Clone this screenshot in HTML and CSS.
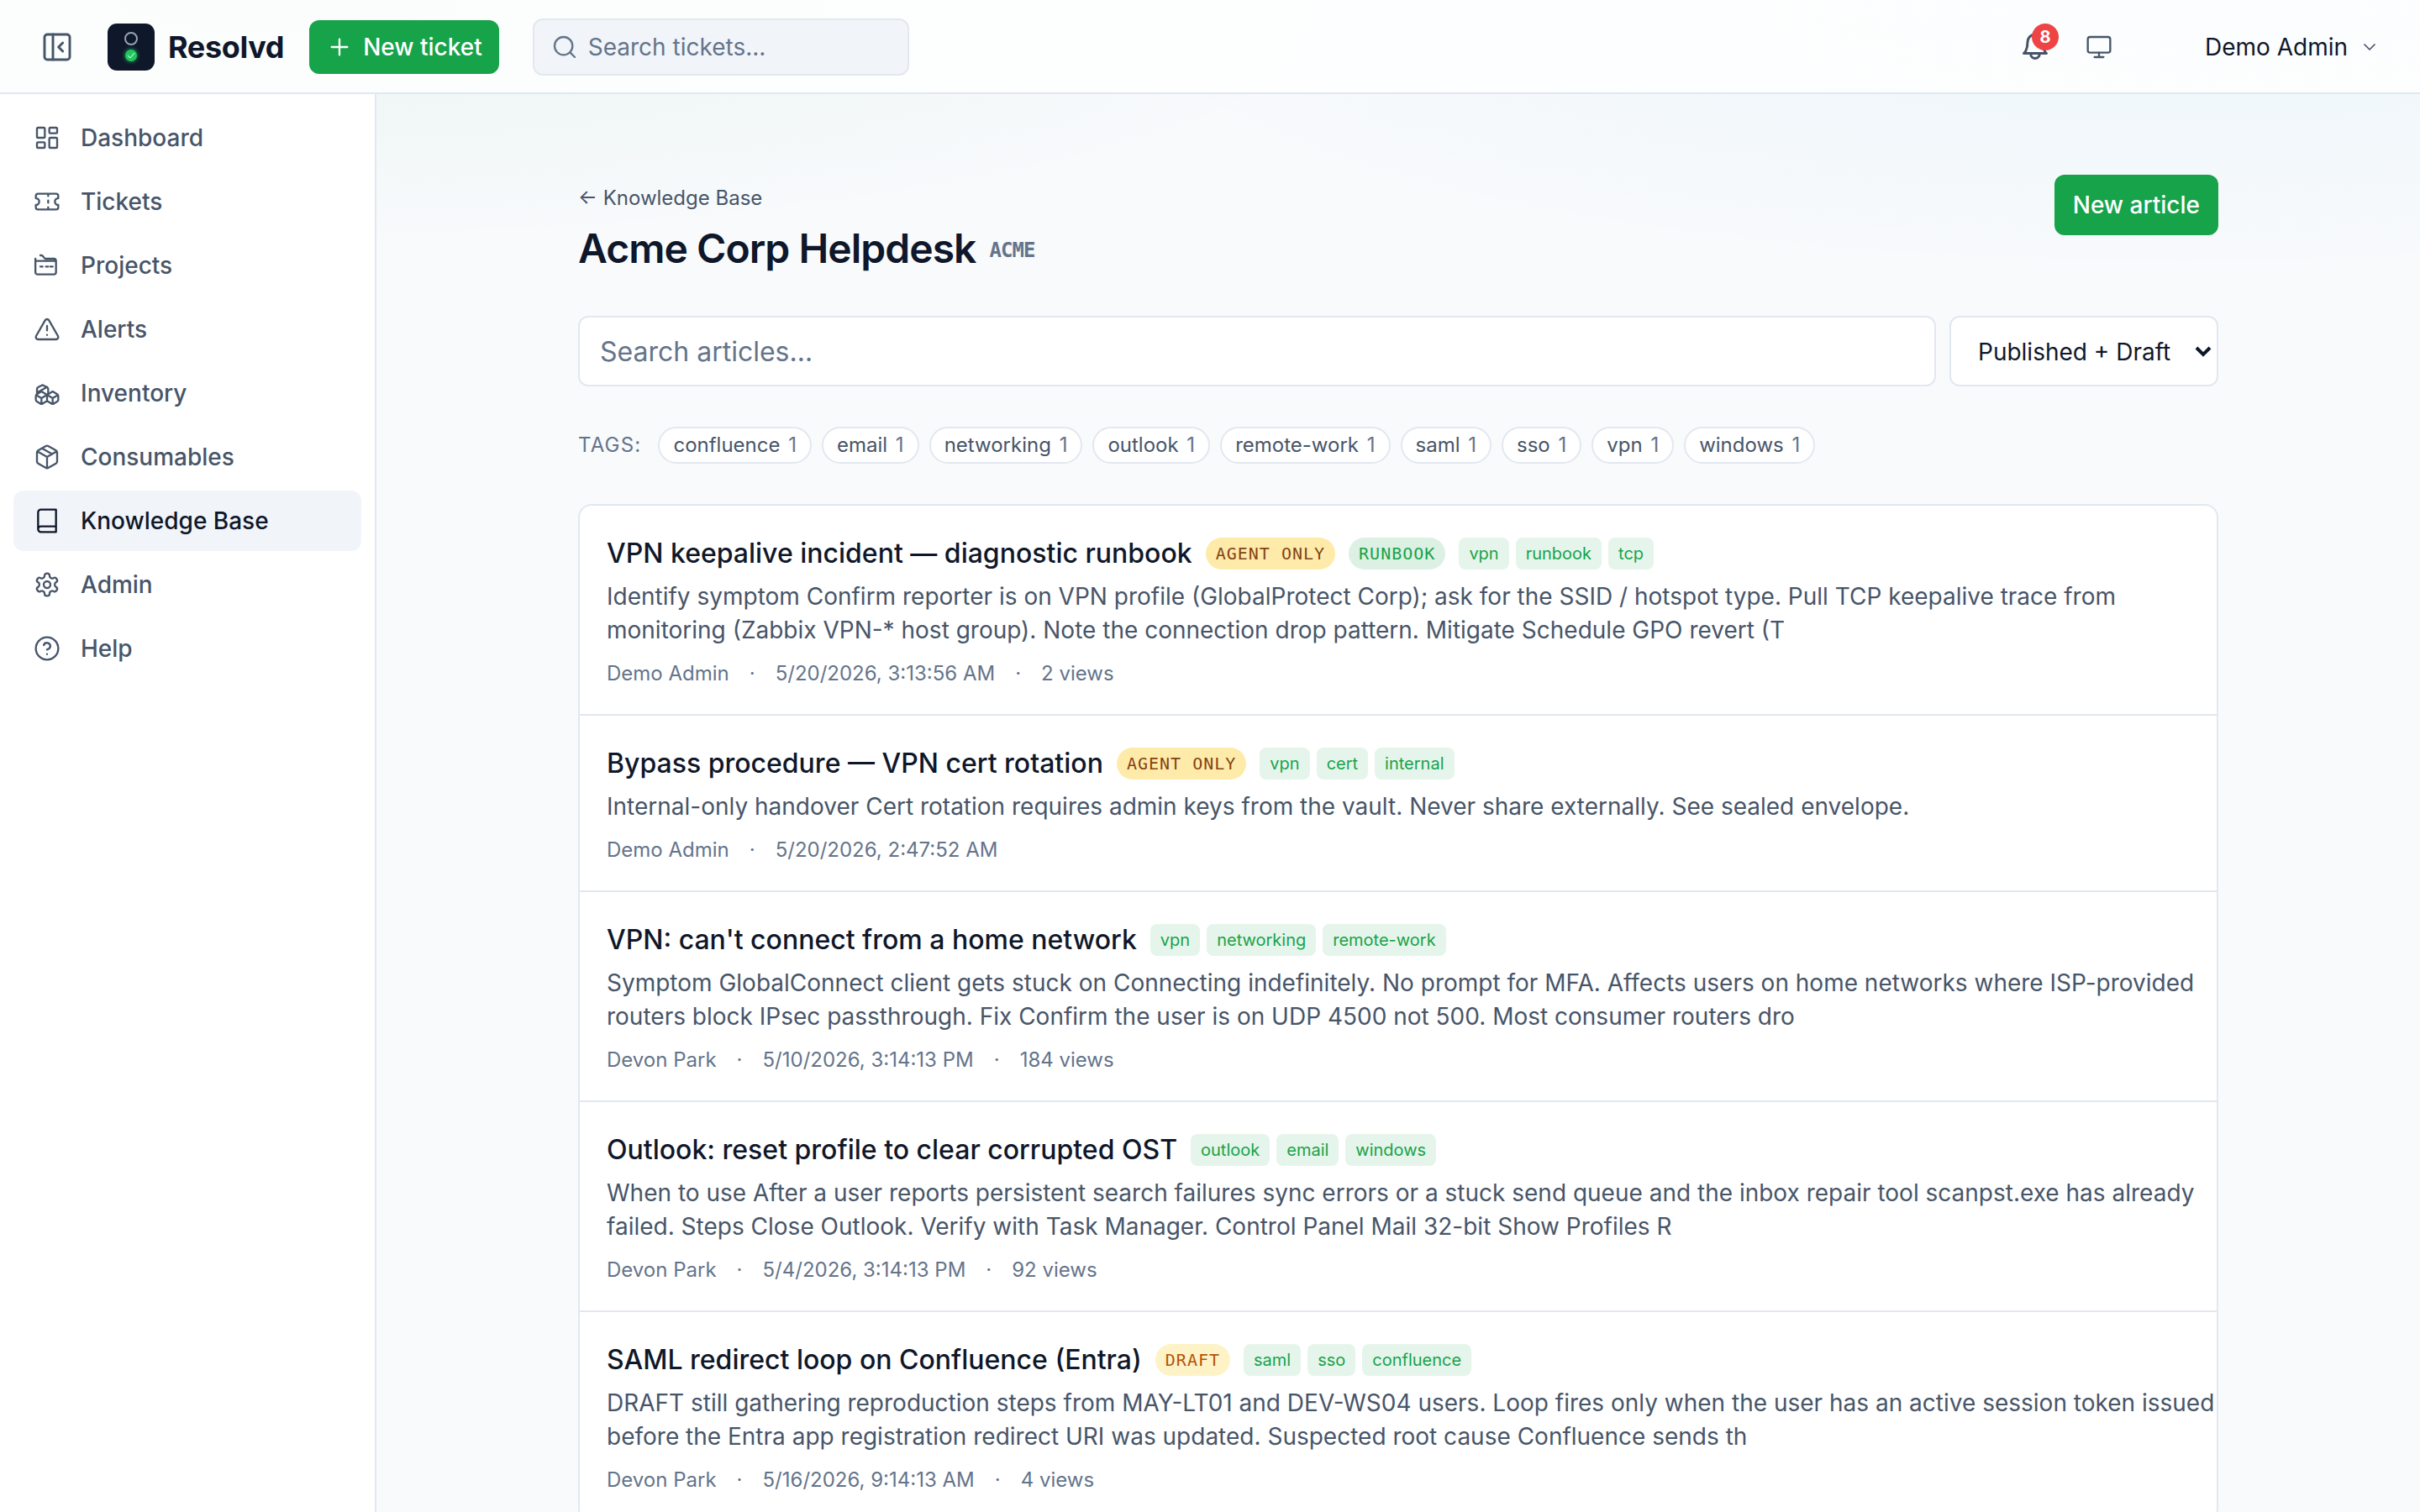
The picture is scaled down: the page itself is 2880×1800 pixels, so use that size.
FILE: index.html
```html
<!DOCTYPE html>
<html lang="en">
<head>
    <meta charset="UTF-8">
    <meta name="viewport" content="width=device-width, initial-scale=1.0">
    <title>Acme Corp Helpdesk - Resolvd</title>
    <link rel="stylesheet" href="styles.css">
</head>
<body>
    <header class="topbar">
        <button class="icon-btn toggle" type="button" aria-label="Collapse sidebar">
            <svg class="icon icon-lg" viewBox="0 0 24 24"><rect x="3" y="3" width="18" height="18" rx="2"/><path d="M9 3v18M16 15l-3-3 3-3"/></svg>
        </button>
        <a class="brand" href="#">
            <svg class="logo" viewBox="0 0 56 56">
                <defs><filter id="glow" x="-50%" y="-50%" width="200%" height="200%"><feGaussianBlur stdDeviation="2"/></filter></defs>
                <rect width="56" height="56" rx="11" fill="#0f172a"/>
                <circle cx="28" cy="18" r="7" fill="none" stroke="#94a3b8" stroke-width="2"/>
                <circle cx="28" cy="38" r="8" fill="#22c55e" opacity="0.6" filter="url(#glow)"/>
                <circle cx="28" cy="38" r="7" fill="#22c55e"/>
                <path d="M24 38l3 3 5-6" fill="none" stroke="#fff" stroke-width="1"/>
            </svg>
            <span>Resolvd</span>
        </a>
        <button class="btn btn-ticket" type="button">
            <svg class="icon" viewBox="0 0 24 24"><path d="M5 12h14M12 5v14"/></svg>
            New ticket
        </button>
        <label class="ticket-search">
            <svg class="icon" viewBox="0 0 24 24"><circle cx="11" cy="11" r="8"/><path d="M21 21l-4-4"/></svg>
            <input type="search" placeholder="Search tickets..." aria-label="Search tickets">
        </label>
        <div class="topbar-right">
            <button class="icon-btn bell" type="button" aria-label="Notifications">
                <svg class="icon icon-md" viewBox="0 0 24 24"><path d="M6 8a6 6 0 0 1 12 0c0 7 3 9 3 9H3s3-2 3-9M8.500 17.500a3.500 3.500 0 0 0 7 0"/></svg>
                <span class="bell-count">8</span>
            </button>
            <button class="icon-btn" type="button" aria-label="Theme">
                <svg class="icon" viewBox="0 0 24 24"><rect x="2" y="3" width="20" height="14" rx="2"/><path d="M8 21h8M12 17v4"/></svg>
            </button>
            <button class="user" type="button">
                Demo Admin
                <svg class="icon icon-sm" viewBox="0 0 24 24"><path d="M6 9l6 6 6-6"/></svg>
            </button>
        </div>
    </header>

    <div class="layout">
        <nav class="sidebar">
            <a class="nav-link" href="#">
                <svg class="icon" viewBox="0 0 24 24"><rect x="3" y="3" width="7" height="9" rx="1"/><rect x="14" y="3" width="7" height="5" rx="1"/><rect x="14" y="12" width="7" height="9" rx="1"/><rect x="3" y="16" width="7" height="5" rx="1"/></svg>
                Dashboard
            </a>
            <a class="nav-link" href="#">
                <svg class="icon" viewBox="0 0 24 24"><path d="M2 9a3 3 0 0 1 0 6v2a2 2 0 0 0 2 2h16a2 2 0 0 0 2-2v-2a3 3 0 0 1 0-6V7a2 2 0 0 0-2-2H4a2 2 0 0 0-2 2ZM13 5v2M13 17v2M13 11v2"/></svg>
                Tickets
            </a>
            <a class="nav-link" href="#">
                <svg class="icon" viewBox="0 0 24 24"><path d="M1.600 6v12a2 2 0 0 0 2 2H18a2 2 0 0 0 2-2V8a2 2 0 0 0-2-2h-7.500c-1.500 0-1.500-3-3.500-3H6M2 8h17.500M6 13h2M11 13h2M15 13h2"/></svg>
                Projects
            </a>
            <a class="nav-link" href="#">
                <svg class="icon" viewBox="0 0 24 24"><path d="M21.730 18l-8-14a2 2 0 0 0-3.480 0l-8 14A2 2 0 0 0 4 21h16a2 2 0 0 0 1.730-3M12 9v4M12 17h.01"/></svg>
                Alerts
            </a>
            <a class="nav-link" href="#">
                <svg class="icon" viewBox="0 0 24 24"><path d="M2.970 12.920A2 2 0 0 0 2 14.630v3.240a2 2 0 0 0 .97 1.710l3 1.800a2 2 0 0 0 2.060 0L12 19v-5.500l-5-3-4.030 2.420ZM7 16.500l-4.740-2.850M7 16.500l5-3M7 16.500v5.170M12 13.500V19l3.970 2.380a2 2 0 0 0 2.060 0l3-1.800a2 2 0 0 0 .97-1.710v-3.240a2 2 0 0 0-.97-1.710L17 10.500l-5 3ZM17 16.500l-5-3M17 16.500l4.740-2.850M17 16.500v5.170"/><path d="M3 12V8.500a2 2 0 0 1 1-1.700l3-1.600a2 2 0 0 1 2 0l3 1.600a2 2 0 0 1 1 1.700V13M4 11l8-4.500"/></svg>
                Inventory
            </a>
            <a class="nav-link" href="#">
                <svg class="icon" viewBox="0 0 24 24"><path d="M11 21.730a2 2 0 0 0 2 0l7-4A2 2 0 0 0 21 16V8a2 2 0 0 0-1-1.730l-7-4a2 2 0 0 0-2 0l-7 4A2 2 0 0 0 3 8v8a2 2 0 0 0 1 1.730zM12 22V12M3.300 7l8.700 5 8.700-5M7.500 4.270l9 5.150"/></svg>
                Consumables
            </a>
            <a class="nav-link active" href="#">
                <svg class="icon" viewBox="0 0 24 24"><path d="M4 19.500v-15A2.500 2.500 0 0 1 6.500 2H20v20H6.500a2.500 2.500 0 0 1 0-5H20"/></svg>
                Knowledge Base
            </a>
            <a class="nav-link" href="#">
                <svg class="icon" viewBox="0 0 24 24"><path d="M12.220 2h-.44a2 2 0 0 0-2 2v.18a2 2 0 0 1-1 1.730l-.43.25a2 2 0 0 1-2 0l-.15-.08a2 2 0 0 0-2.730.73l-.22.38a2 2 0 0 0 .73 2.730l.15.1a2 2 0 0 1 1 1.720v.51a2 2 0 0 1-1 1.740l-.15.09a2 2 0 0 0-.73 2.730l.22.38a2 2 0 0 0 2.730.73l.15-.08a2 2 0 0 1 2 0l.43.25a2 2 0 0 1 1 1.730V20a2 2 0 0 0 2 2h.44a2 2 0 0 0 2-2v-.18a2 2 0 0 1 1-1.730l.43-.25a2 2 0 0 1 2 0l.15.08a2 2 0 0 0 2.730-.73l.22-.39a2 2 0 0 0-.73-2.730l-.15-.08a2 2 0 0 1-1-1.740v-.5a2 2 0 0 1 1-1.740l.15-.09a2 2 0 0 0 .73-2.730l-.22-.38a2 2 0 0 0-2.730-.73l-.15.08a2 2 0 0 1-2 0l-.43-.25a2 2 0 0 1-1-1.730V4a2 2 0 0 0-2-2z"/><circle cx="12" cy="12" r="3"/></svg>
                Admin
            </a>
            <a class="nav-link" href="#">
                <svg class="icon" viewBox="0 0 24 24"><circle cx="12" cy="12" r="10"/><path d="M9.090 9a3 3 0 0 1 5.830 1c0 2-3 3-3 3M12 17h.01"/></svg>
                Help
            </a>
        </nav>

        <main class="main">
            <div class="container">
                <div class="page-head">
                    <div>
                        <a class="back" href="#">← Knowledge Base</a>
                        <h1>Acme Corp Helpdesk <span class="project-key">ACME</span></h1>
                    </div>
                    <button class="btn btn-article" type="button">New article</button>
                </div>

                <div class="filters">
                    <input class="article-search" type="search" placeholder="Search articles…" aria-label="Search articles">
                    <div class="status">
                        <select aria-label="Status">
                            <option>Published + Draft</option>
                            <option>Published</option>
                            <option>Draft</option>
                        </select>
                        <svg class="status-arrow" viewBox="0 0 20 14"><path d="M2 3l8 8 8-8"/></svg>
                    </div>
                </div>

                <div class="tags">
                    <span class="tags-label">Tags:</span>
                    <button class="pill" type="button">confluence <span>1</span></button>
                    <button class="pill" type="button">email <span>1</span></button>
                    <button class="pill" type="button">networking <span>1</span></button>
                    <button class="pill" type="button">outlook <span>1</span></button>
                    <button class="pill" type="button">remote-work <span>1</span></button>
                    <button class="pill" type="button">saml <span>1</span></button>
                    <button class="pill" type="button">sso <span>1</span></button>
                    <button class="pill" type="button">vpn <span>1</span></button>
                    <button class="pill" type="button">windows <span>1</span></button>
                </div>

                <div class="articles">
                    <article class="article">
                        <div class="article-head">
                            <a class="article-title" href="#">VPN keepalive incident — diagnostic runbook</a>
                            <span class="badge agent">Agent only</span>
                            <span class="badge runbook">Runbook</span>
                            <div class="article-tags"><span>vpn</span><span>runbook</span><span>tcp</span></div>
                        </div>
                        <p>Identify symptom Confirm reporter is on VPN profile (GlobalProtect Corp); ask for the SSID / hotspot type. Pull TCP keepalive trace from monitoring (Zabbix VPN-* host group). Note the connection drop pattern. Mitigate Schedule GPO revert (T</p>
                        <div class="meta"><span>Demo Admin</span><span>·</span><span>5/20/2026, 3:13:56 AM</span><span>·</span><span>2 views</span></div>
                    </article>
                    <article class="article">
                        <div class="article-head">
                            <a class="article-title" href="#">Bypass procedure — VPN cert rotation</a>
                            <span class="badge agent">Agent only</span>
                            <div class="article-tags"><span>vpn</span><span>cert</span><span>internal</span></div>
                        </div>
                        <p>Internal-only handover Cert rotation requires admin keys from the vault. Never share externally. See sealed envelope.</p>
                        <div class="meta"><span>Demo Admin</span><span>·</span><span>5/20/2026, 2:47:52 AM</span></div>
                    </article>
                    <article class="article">
                        <div class="article-head">
                            <a class="article-title" href="#">VPN: can't connect from a home network</a>
                            <div class="article-tags"><span>vpn</span><span>networking</span><span>remote-work</span></div>
                        </div>
                        <p>Symptom GlobalConnect client gets stuck on Connecting indefinitely. No prompt for MFA. Affects users on home networks where ISP-provided routers block IPsec passthrough. Fix Confirm the user is on UDP 4500 not 500. Most consumer routers dro</p>
                        <div class="meta"><span>Devon Park</span><span>·</span><span>5/10/2026, 3:14:13 PM</span><span>·</span><span>184 views</span></div>
                    </article>
                    <article class="article">
                        <div class="article-head">
                            <a class="article-title" href="#">Outlook: reset profile to clear corrupted OST</a>
                            <div class="article-tags"><span>outlook</span><span>email</span><span>windows</span></div>
                        </div>
                        <p>When to use After a user reports persistent search failures sync errors or a stuck send queue and the inbox repair tool scanpst.exe has already failed. Steps Close Outlook. Verify with Task Manager. Control Panel Mail 32-bit Show Profiles R</p>
                        <div class="meta"><span>Devon Park</span><span>·</span><span>5/4/2026, 3:14:13 PM</span><span>·</span><span>92 views</span></div>
                    </article>
                    <article class="article">
                        <div class="article-head">
                            <a class="article-title" href="#">SAML redirect loop on Confluence (Entra)</a>
                            <span class="badge draft">Draft</span>
                            <div class="article-tags"><span>saml</span><span>sso</span><span>confluence</span></div>
                        </div>
                        <p>DRAFT still gathering reproduction steps from MAY-LT01 and DEV-WS04 users. Loop fires only when the user has an active session token issued before the Entra app registration redirect URI was updated. Suspected root cause Confluence sends th</p>
                        <div class="meta"><span>Devon Park</span><span>·</span><span>5/16/2026, 9:14:13 AM</span><span>·</span><span>4 views</span></div>
                    </article>
                </div>
            </div>
        </main>
    </div>
</body>
</html>
```
FILE: styles.css
```css
* {
    box-sizing: border-box;
}

body {
    margin: 0;
    height: 100vh;
    display: flex;
    flex-direction: column;
    overflow: hidden;
    font-family: Inter, "Liberation Sans", sans-serif;
    font-size: 28px;
    line-height: 40px;
    color: #0f172a;
    background-color: #f8fafc;
    background-image:
        radial-gradient(ellipse 45% 16% at 12% 0, rgba(22, 163, 74, 0.06), transparent),
        radial-gradient(ellipse 45% 18% at 90% 0, rgba(14, 165, 233, 0.05), transparent);
}

a {
    color: inherit;
    text-decoration: none;
}

button,
input,
select {
    font: inherit;
    color: inherit;
}

button {
    border: none;
    background: none;
    cursor: pointer;
}

.icon {
    width: 32px;
    height: 32px;
    flex-shrink: 0;
    fill: none;
    stroke: currentColor;
    stroke-width: 1.75;
    stroke-linecap: round;
    stroke-linejoin: round;
}

.icon-sm {
    width: 24px;
    height: 24px;
}

.icon-md {
    width: 36px;
    height: 36px;
    stroke-width: 2;
}

.icon-lg {
    width: 40px;
    height: 40px;
}

/* top bar */
.topbar {
    display: flex;
    align-items: center;
    height: 112px;
    flex-shrink: 0;
    padding: 2px 32px 0;
    border-bottom: 2px solid #e2e8f0;
    background-color: rgba(255, 255, 255, 0.8);
}

.icon-btn {
    display: flex;
    padding: 16px;
    color: #475569;
}

.brand {
    display: flex;
    align-items: center;
    gap: 16px;
    margin-left: 24px;
    margin-right: 30px;
    font-size: 36px;
    font-weight: 700;
    letter-spacing: -0.01em;
}

.logo {
    width: 56px;
    height: 56px;
}

.btn {
    border-radius: 12px;
    background-color: #16a34a;
    color: #fff;
    font-weight: 500;
    white-space: nowrap;
}

.btn-ticket {
    display: flex;
    align-items: center;
    gap: 12px;
    height: 64px;
    padding: 0 20px;
}

.btn-article {
    height: 72px;
    padding: 0 22px;
}

.ticket-search {
    display: flex;
    align-items: center;
    gap: 12px;
    width: 448px;
    height: 68px;
    margin-left: 40px;
    padding: 0 20px;
    border: 2px solid #e2e8f0;
    border-radius: 12px;
    background-color: #f1f5f9;
    color: #64748b;
}

.ticket-search input {
    flex: 1;
    min-width: 0;
    padding: 0;
    border: none;
    outline: none;
    background: none;
}

::placeholder {
    color: #64748b;
    opacity: 1;
}

.topbar-right {
    display: flex;
    align-items: center;
    gap: 10px;
    margin-left: auto;
}

.bell {
    position: relative;
}

.bell-count {
    position: absolute;
    top: 6px;
    right: 6px;
    width: 32px;
    height: 32px;
    border-radius: 50%;
    background-color: #ef4444;
    color: #fff;
    font-size: 20px;
    font-weight: 700;
    line-height: 32px;
}

.user {
    display: flex;
    align-items: center;
    gap: 14px;
    margin-left: 68px;
    padding: 0 16px;
}

.user .icon {
    color: #475569;
}

/* sidebar */
.layout {
    display: flex;
    flex: 1;
    min-height: 0;
}

.sidebar {
    display: flex;
    flex-direction: column;
    gap: 4px;
    width: 448px;
    flex-shrink: 0;
    padding: 16px;
    border-right: 2px solid #e2e8f0;
    background-color: #fff;
}

.nav-link {
    display: flex;
    align-items: center;
    gap: 24px;
    padding: 16px 24px;
    border-radius: 12px;
    color: #475569;
    font-weight: 500;
}

.nav-link.active {
    background-color: #f1f5f9;
    color: #0f172a;
}

/* page */
.main {
    flex: 1;
    min-width: 0;
    padding: 96px 48px;
    overflow-y: auto;
    scrollbar-width: none;
}

.container {
    max-width: 1952px;
    margin: 0 auto;
}

.page-head {
    display: flex;
    justify-content: space-between;
    align-items: flex-start;
    margin-bottom: 48px;
}

.back {
    display: block;
    padding-top: 8px;
    color: #475569;
    font-size: 24px;
}

h1 {
    display: flex;
    align-items: center;
    gap: 16px;
    margin: 8px 0 0;
    font-size: 48px;
    font-weight: 600;
    line-height: 64px;
    letter-spacing: -0.02em;
}

.project-key {
    padding-top: 4px;
    color: #64748b;
    font-family: "DejaVu Sans Mono", monospace;
    font-size: 24px;
    line-height: 36px;
}

.filters {
    display: flex;
    gap: 16px;
    margin-bottom: 48px;
}

.article-search,
.status select {
    height: 84px;
    border: 2px solid #e2e8f0;
    border-radius: 12px;
    background-color: #fff;
}

.article-search {
    flex: 1;
    min-width: 0;
    padding: 0 24px;
    font-size: 32px;
}

.status {
    position: relative;
}

.status select {
    width: 320px;
    padding: 2px 32px 0;
    appearance: none;
}

.status-arrow {
    position: absolute;
    top: 35px;
    right: 8px;
    width: 20px;
    height: 14px;
    fill: none;
    stroke: #0f172a;
    stroke-width: 4;
    pointer-events: none;
}

.tags {
    display: flex;
    flex-wrap: wrap;
    align-items: center;
    gap: 12px;
    margin-bottom: 48px;
    font-size: 24px;
}

.tags-label {
    margin-right: 8px;
    color: #64748b;
    text-transform: uppercase;
    letter-spacing: 0.05em;
}

.pill {
    height: 44px;
    padding: 0 16px;
    border: 2px solid #e2e8f0;
    border-radius: 22px;
    background-color: #fff;
    color: #475569;
}

.pill span {
    margin-left: 3px;
    color: #64748b;
}

/* article list */
.articles {
    border: 2px solid #e2e8f0;
    border-radius: 16px;
    background-color: #fff;
}

.article {
    padding: 33px 0 30px 32px;
    border-bottom: 2px solid #e2e8f0;
}

.article:last-child {
    border-bottom: none;
}

.article-head {
    display: flex;
    flex-wrap: wrap;
    align-items: center;
    gap: 16px;
}

.article-title {
    font-size: 32px;
    font-weight: 500;
    line-height: 48px;
}

.badge {
    padding: 4px 12px;
    border-radius: 19px;
    font-family: "DejaVu Sans Mono", monospace;
    font-size: 20px;
    line-height: 30px;
    letter-spacing: 0.05em;
    text-transform: uppercase;
}

.badge.agent {
    background-color: #feebaa;
    color: #854312;
}

.badge.runbook {
    background-color: #dcf0e3;
    color: #16a34a;
}

.badge.draft {
    background-color: #fef3c7;
    color: #b45309;
}

.article-tags {
    display: flex;
    gap: 8px;
}

.article-tags span {
    padding: 4px 12px;
    border-radius: 8px;
    background-color: #e6f5eb;
    color: #16a34a;
    font-size: 20px;
    line-height: 30px;
}

.article p {
    margin: 7px 0 14px;
    color: #475569;
}

.meta {
    display: flex;
    gap: 24px;
    color: #64748b;
    font-size: 24px;
    line-height: 36px;
}
```
